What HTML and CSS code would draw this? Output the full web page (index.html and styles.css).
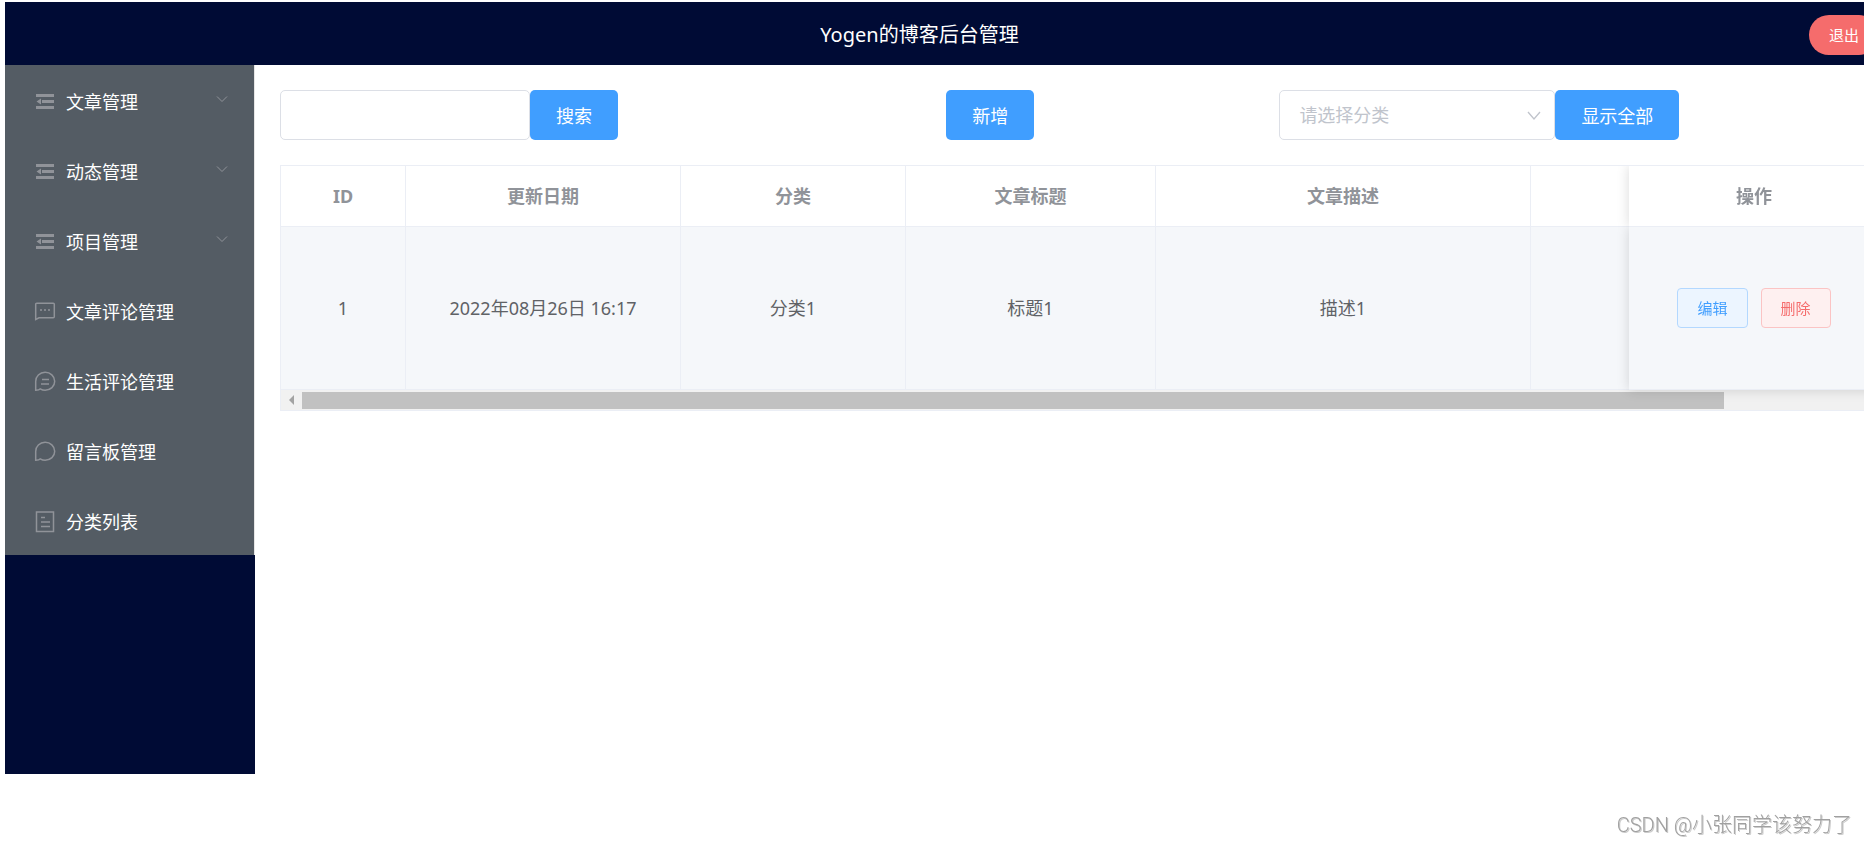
FILE: index.html
```html
<!DOCTYPE html>
<html lang="zh-CN">

<head>
  <meta charset="UTF-8">
  <meta name="viewport" content="width=device-width, initial-scale=1.0">
  <title>Yogen的博客后台管理</title>
  <link rel="stylesheet" href="styles.css">
</head>

<body>
  <div class="container">
    <header class="header">
      <div class="title">Yogen的博客后台管理</div>
      <button class="btn btn-logout" type="button">退出</button>
    </header>
    <div class="content">
      <aside class="aside">
        <nav class="menu">
          <a class="menu-item" href="#">
            <svg class="icon" viewBox="0 0 22 22"><path d="M2 3h18v3H2zM8 9h12v3H8zM2 15h18v3H2zM2.500 10.500l4.500-3v6z" fill="#909399"/></svg>
            <span>文章管理</span>
            <svg class="arrow" viewBox="0 0 12 12"><path d="M1 3.500l5 5 5-5"/></svg>
          </a>
          <a class="menu-item" href="#">
            <svg class="icon" viewBox="0 0 22 22"><path d="M2 3h18v3H2zM8 9h12v3H8zM2 15h18v3H2zM2.500 10.500l4.500-3v6z" fill="#909399"/></svg>
            <span>动态管理</span>
            <svg class="arrow" viewBox="0 0 12 12"><path d="M1 3.500l5 5 5-5"/></svg>
          </a>
          <a class="menu-item" href="#">
            <svg class="icon" viewBox="0 0 22 22"><path d="M2 3h18v3H2zM8 9h12v3H8zM2 15h18v3H2zM2.500 10.500l4.500-3v6z" fill="#909399"/></svg>
            <span>项目管理</span>
            <svg class="arrow" viewBox="0 0 12 12"><path d="M1 3.500l5 5 5-5"/></svg>
          </a>
          <a class="menu-item" href="#">
            <svg class="icon line" viewBox="0 0 22 22"><path d="M1.700 18.500V3.200a1 1 0 0 1 1-1h16.600a1 1 0 0 1 1 1v12.600a1 1 0 0 1-1 1H5z"/><path d="M6 9h2M10 9h2M14 9h2"/></svg>
            <span>文章评论管理</span>
          </a>
          <a class="menu-item" href="#">
            <svg class="icon line" viewBox="0 0 22 22"><path d="M1.700 19.300V10.500a9.500 9 0 1 1 9.500 8.800c-2 0-3.500-.5-5-1.400-.8 1.200-2.500 1.400-4.500 1.400z"/><path d="M8 8.500h7M7 13h8"/></svg>
            <span>生活评论管理</span>
          </a>
          <a class="menu-item" href="#">
            <svg class="icon line" viewBox="0 0 22 22"><path d="M1.700 19.300V10.500a9.500 9 0 1 1 9.500 8.800c-2 0-3.500-.5-5-1.400-.8 1.200-2.500 1.400-4.500 1.400z"/></svg>
            <span>留言板管理</span>
          </a>
          <a class="menu-item" href="#">
            <svg class="icon line" viewBox="0 0 22 22"><path d="M2.500 1h17v19.500h-17z"/><path d="M7 6.500h4M7 11h9M7 15.500h9"/></svg>
            <span>分类列表</span>
          </a>
        </nav>
      </aside>
      <main class="main">
        <div class="toolbar">
          <div class="tool">
            <input class="input" type="text" aria-label="搜索">
            <button class="btn" type="button">搜索</button>
          </div>
          <div class="tool">
            <button class="btn" type="button">新增</button>
          </div>
          <div class="tool">
            <div class="select-box">
              <select class="input select" aria-label="请选择分类">
                <option>请选择分类</option>
              </select>
              <svg class="select-arrow" viewBox="0 0 14 14"><path d="M1 3l6 7 6-7"/></svg>
            </div>
            <button class="btn" type="button">显示全部</button>
          </div>
        </div>
        <div class="table-box">
          <table class="table">
            <colgroup>
              <col class="col-id">
              <col class="col-date">
              <col class="col-sort">
              <col class="col-title">
              <col class="col-desc">
              <col class="col-more">
              <col class="col-action">
            </colgroup>
            <thead>
              <tr>
                <th>ID</th>
                <th>更新日期</th>
                <th>分类</th>
                <th>文章标题</th>
                <th>文章描述</th>
                <th></th>
                <th class="fixed">操作</th>
              </tr>
            </thead>
            <tbody>
              <tr>
                <td>1</td>
                <td>2022年08月26日 16:17</td>
                <td>分类1</td>
                <td>标题1</td>
                <td>描述1</td>
                <td></td>
                <td class="fixed">
                  <div class="actions">
                    <button class="btn-small btn-edit" type="button">编辑</button>
                    <button class="btn-small btn-delete" type="button">删除</button>
                  </div>
                </td>
              </tr>
            </tbody>
          </table>
          <div class="scrollbar">
            <span class="scroll-left"></span>
            <span class="thumb"></span>
          </div>
        </div>
      </main>
    </div>
  </div>
  <div class="watermark">CSDN @小张同学该努力了</div>
</body>

</html>
```
FILE: styles.css
```css
* {
  box-sizing: border-box;
}

body {
  margin: 0;
  overflow: hidden;
  background: #fff;
  font-family: 'Noto Sans', 'Noto Sans CJK SC', sans-serif;
  font-size: 18px;
  line-height: 24px;
}

button,
input,
select {
  font-family: inherit;
  font-size: inherit;
}

/* wider than the window, the right edge is cut off */
.container {
  margin: 2px -40px 0 5px;
}

.header {
  display: flex;
  align-items: center;
  height: 63px;
  padding: 2px 25px 0;
  background: #000b35;
  color: #fff;
}

.title {
  flex: 1;
  text-align: center;
  font-size: 20px;
}

.content {
  display: flex;
}

.aside {
  flex: none;
  width: 250px;
  min-height: calc(100vh - 135px);
  background: #000b35;
}

.menu {
  border-right: 1px solid #e6e6e6;
  background: #545c64;
}

.menu-item {
  display: flex;
  align-items: center;
  height: 70px;
  padding: 4px 26px 0 29px;
  color: #fff;
  text-decoration: none;
}

.icon {
  width: 22px;
  height: 22px;
  margin-right: 10px;
}

.line {
  fill: none;
  stroke: #909399;
  stroke-width: 1.5;
}

.arrow {
  width: 12px;
  height: 12px;
  margin: 0 0 6px auto;
  fill: none;
  stroke: #909399;
}

.main {
  flex: 1;
  min-width: 0;
  padding: 25px;
}

.toolbar {
  display: grid;
  grid-template-columns: 10fr 5fr 9fr;
  margin-bottom: 25px;
}

.tool {
  display: flex;
}

.input {
  width: 250px;
  height: 50px;
  padding: 0 19px;
  border: 1px solid #dcdfe6;
  border-radius: 5px;
  background: #fff;
}

.select-box {
  position: relative;
}

.select {
  width: 276px;
  appearance: none;
  color: #c0c4cc;
}

.select-arrow {
  position: absolute;
  top: 19px;
  right: 14px;
  width: 14px;
  height: 14px;
  fill: none;
  stroke: #c0c4cc;
  stroke-width: 1.3;
  pointer-events: none;
}

.btn {
  height: 50px;
  padding: 0 26px;
  border: 0;
  border-radius: 5px;
  background: #409eff;
  color: #fff;
}

.btn-logout {
  height: 40px;
  padding: 0 20px;
  border-radius: 20px;
  background: #f56c6c;
  font-size: 15px;
}

.table-box {
  overflow: hidden;
  border: 1px solid #ebeef5;
  border-right: 0;
}

.table {
  width: 1750px;
  table-layout: fixed;
  border-spacing: 0;
  color: #606266;
  text-align: center;
}

.col-id {
  width: 125px;
}

.col-date {
  width: 275px;
}

.col-sort {
  width: 225px;
}

.col-title,
.col-more,
.col-action {
  width: 250px;
}

.col-desc {
  width: 375px;
}

.table th,
.table td {
  padding: 0;
  border-right: 1px solid #ebeef5;
  border-bottom: 1px solid #ebeef5;
}

.table th {
  height: 61px;
  background: #fff;
  color: #909399;
}

.table td {
  height: 163px;
  padding-bottom: 1px;
  background: #f5f7fa;
}

.table .fixed {
  position: sticky;
  right: 0;
  border-right: 0;
  box-shadow: 0 0 12px rgba(0, 0, 0, .15);
  clip-path: inset(0 0 0 -15px);
}

.table td.fixed {
  clip-path: inset(0 0 -15px -15px);
}

.actions {
  display: flex;
  justify-content: center;
  gap: 13px;
}

.btn-small {
  height: 40px;
  padding: 0 19px;
  border: 1px solid;
  border-radius: 4px;
  font-size: 15px;
}

.btn-edit {
  border-color: #b3d8ff;
  background: #ecf5ff;
  color: #409eff;
}

.btn-delete {
  border-color: #fbc4c4;
  background: #fef0f0;
  color: #f56c6c;
}

.scrollbar {
  display: flex;
  align-items: center;
  height: 20px;
  background: #f1f1f1;
}

.scroll-left {
  margin: 0 8px;
  border: 5px solid transparent;
  border-right-color: #a3a3a3;
  border-left: 0;
}

.thumb {
  width: 89%;
  height: 17px;
  background: #c1c1c1;
}

.watermark {
  position: fixed;
  right: 12px;
  bottom: 7px;
  color: #a0a0a0;
  font-family: Roboto, 'Noto Sans CJK SC', sans-serif;
  font-size: 20px;
  font-weight: 300;
  text-shadow: 1px 1px 0 #ccc;
}
```
